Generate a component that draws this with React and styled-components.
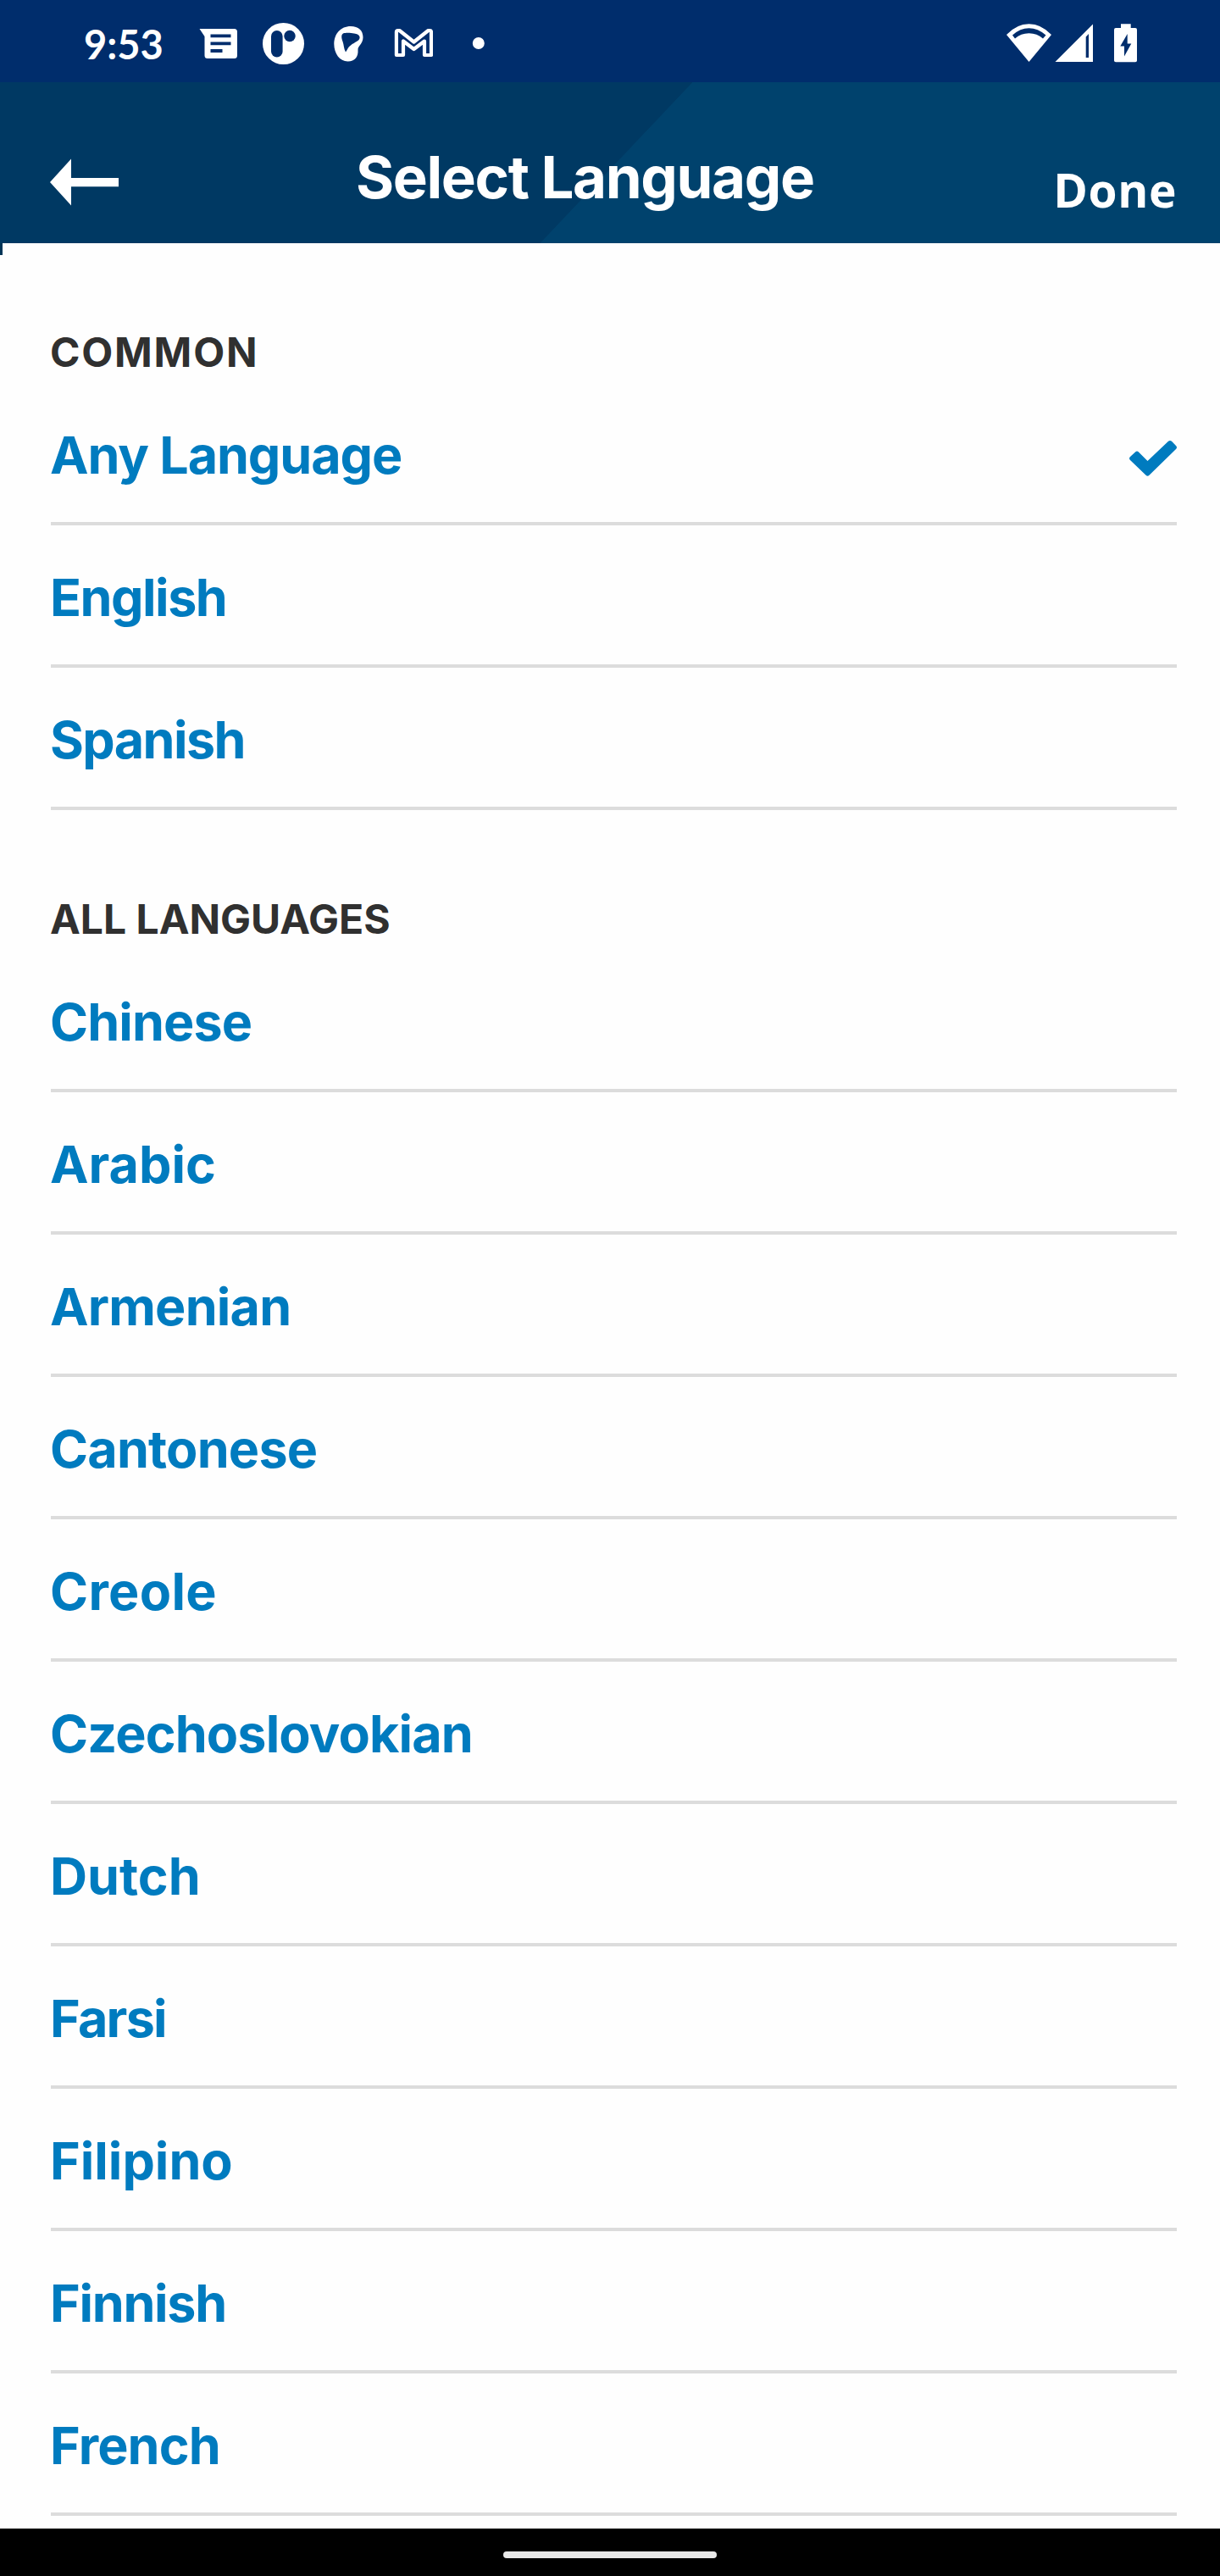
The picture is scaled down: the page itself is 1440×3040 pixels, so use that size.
import React from "react";
import styled, { createGlobalStyle } from "styled-components";

const GlobalStyle = createGlobalStyle`
  body {
    margin: 0;
    background: #fefefe;
  }
`;

const Screen = styled.div`
  display: flex;
  flex-direction: column;
  width: 1440px;
  height: 3040px;
  overflow: hidden;
  background: #fefefe;
  font-family: Inter, "Liberation Sans", sans-serif;
`;

const StatusBar = styled.div`
  display: flex;
  align-items: center;
  box-sizing: border-box;
  height: 97px;
  flex: none;
  padding: 7px 98px 0 99px;
  background: #002d6c;
  color: #fff;
`;

const Clock = styled.div`
  width: 136px;
  font: 700 47px/56px Lato, sans-serif;
`;

const Glyph = styled.svg`
  display: block;
  flex: none;
  width: ${(p) => p.$width}px;
  height: ${(p) => p.$height || 50}px;
  margin-left: ${(p) => p.$gap || 0}px;
  margin-top: ${(p) => p.$drop || 0}px;
`;

const SystemIcons = styled.div`
  display: flex;
  align-items: center;
  margin-left: auto;
`;

const Header = styled.header`
  display: flex;
  align-items: center;
  box-sizing: border-box;
  height: 190px;
  flex: none;
  padding: 34px 51px 0 59px;
  color: #fff;
  background: linear-gradient(to bottom right, #003963 50%, #00426d 50.3%) 637px 0 / 180px 190px no-repeat,
    linear-gradient(to right, #003963 640px, #00426d 640px);
`;

const BackButton = styled.button`
  display: flex;
  width: 361px;
  padding: 0;
  border: 0;
  background: none;
`;

const Title = styled.h1`
  margin: 0;
  font-size: 69px;
  font-weight: 700;
  line-height: 84px;
  letter-spacing: -1.4px;
  white-space: nowrap;
`;

const DoneButton = styled.button`
  margin: 30px 0 0 auto;
  padding: 0;
  border: 0;
  background: none;
  color: #fff;
  font: 700 55px/74px "Open Sans", "Noto Sans", sans-serif;
  letter-spacing: 0.6px;
`;

const Content = styled.main`
  flex: 1;
  min-height: 0;
  padding: 0 51px 0 60px;
  position: relative;
`;

const EdgeMark = styled.span`
  position: absolute;
  left: 0;
  top: 0;
  width: 3px;
  height: 14px;
  background: #003557;
`;

const SectionTitle = styled.h2`
  display: flex;
  align-items: flex-end;
  box-sizing: border-box;
  height: 165px;
  margin: 0;
  padding-bottom: 7px;
  color: #303030;
  font-size: 48px;
  font-weight: 700;
  line-height: 58px;
  letter-spacing: ${(p) => p.$tracking}px;
  text-indent: -1px;
`;

const List = styled.ul`
  margin: 0;
  padding: 0;
  list-style: none;
`;

const Row = styled.li`
  display: flex;
  align-items: center;
  justify-content: space-between;
  box-sizing: border-box;
  height: 168px;
  padding-top: 5px;
  border-bottom: 4px solid #dcdcdc;
  color: #007bbf;
  font-size: 61px;
  font-weight: 700;
  line-height: 74px;
  letter-spacing: ${(p) => p.$tracking}px;
  text-indent: -1px;
`;

const NavigationBar = styled.div`
  display: flex;
  justify-content: center;
  box-sizing: border-box;
  height: 56px;
  flex: none;
  padding-top: 27px;
  background: #000;
`;

const HomeHandle = styled.div`
  width: 252px;
  height: 8px;
  border-radius: 4px;
  background: #e8e8e8;
`;

const sections = [
  {
    title: "COMMON",
    tracking: 1.8,
    items: [
      { name: "Any Language", tracking: -1.1, selected: true },
      { name: "English", tracking: -1.5 },
      { name: "Spanish", tracking: -1.6 },
    ],
  },
  {
    title: "ALL LANGUAGES",
    tracking: 0,
    items: [
      { name: "Chinese", tracking: -0.9 },
      { name: "Arabic", tracking: 0 },
      { name: "Armenian", tracking: -0.8 },
      { name: "Cantonese", tracking: -0.8 },
      { name: "Creole", tracking: 0.3 },
      { name: "Czechoslovokian", tracking: -0.85 },
      { name: "Dutch", tracking: 0 },
      { name: "Farsi", tracking: -1.8 },
      { name: "Filipino", tracking: 0 },
      { name: "Finnish", tracking: -1.3 },
      { name: "French", tracking: -0.9 },
    ],
  },
];

const MessageIcon = () => (
  <Glyph $width={46} viewBox="235 27 46 50">
    <path fill="#fff" d="M235.5 34H276.500Q280 34 280 37.500V65.500Q280 69 276.500 69H245Q241.500 69 241.500 65.500V43Z" />
    <path stroke="#002d6c" strokeWidth="3.800" d="M248.500 42.300H272.500M248.500 51.300H272.500M248.500 60H262.500" />
  </Glyph>
);

const RoundAppIcon = () => (
  <Glyph $width={50} $gap={29} viewBox="310 27 50 50">
    <circle cx="334.500" cy="51.500" r="24.500" fill="#fff" />
    <rect x="320" y="36" width="13.600" height="31.500" rx="6.800" fill="#002d6c" />
    <circle cx="342" cy="42.500" r="6.700" fill="#002d6c" />
  </Glyph>
);

const BlobIcon = () => (
  <Glyph $width={36} $gap={33} viewBox="393 27 36 50">
    <path
      fill="#fff"
      fillRule="evenodd"
      d="M414 31C423 31 428.500 36 428.500 44C428.500 52 422 54 422.500 59C423 67 419 72.500 410.500 72.500C401 72.500 394.300 63 394.300 52C394.300 40 402 31 414 31ZM405 39.500C402.500 41 403 45 404.500 49C406 53 405.500 57 408 61.500C411 57 411 55.500 414 53.500C416 51.500 417.500 51.500 419 50C422 48.500 425 47 424.500 43.500C424 41 421.500 40 418 39.500C414 38.800 408 38.500 405 39.500Z"
    />
  </Glyph>
);

const MailIcon = () => (
  <Glyph $width={46} $gap={36} viewBox="465 27 46 50">
    <path
      fill="none"
      stroke="#fff"
      strokeWidth="4.200"
      strokeLinejoin="round"
      d="M467.900 37.800Q467.900 36 469.700 36H471.500L488.500 49.500L505.500 36H507.200Q509 36 509 37.800V65H501V48.500L488.500 58L476 48.500V65H467.900Z"
    />
  </Glyph>
);

const MoreDot = () => (
  <Glyph $width={16} $gap={46} viewBox="557 27 16 50">
    <circle cx="564.800" cy="51" r="7" fill="#fff" />
  </Glyph>
);

const WifiIcon = () => (
  <Glyph $width={54} viewBox="1188 27 54 50">
    <path
      fill="#fff"
      fillRule="evenodd"
      d="M1188 41Q1200 28.300 1214.500 28.300Q1229 28.300 1241 41L1214.500 73ZM1195 41.500L1198 45.500Q1205 39.200 1214.500 39.200Q1224 39.200 1231 45.500L1234.500 41.500Q1225 33.200 1214.500 33.200Q1204 33.200 1195 41.500Z"
    />
  </Glyph>
);

const SignalIcon = () => (
  <Glyph $width={46} $gap={3} viewBox="1245 27 46 50">
    <path fill="#fff" fillRule="evenodd" d="M1245.500 73L1290 28.500V73ZM1281.700 43.500V68H1285V40Z" />
  </Glyph>
);

const BatteryIcon = () => (
  <Glyph $width={28} $gap={23} viewBox="1314 27 28 50">
    <path
      fill="#fff"
      fillRule="evenodd"
      d="M1323 28.300H1334.700V33H1340Q1342 33 1342 35V71.500Q1342 73.300 1340 73.300H1317Q1315 73.300 1315 71.500V35Q1315 33 1317 33H1323ZM1330.700 40L1322.300 54.500H1327V66.500L1335.300 51.500H1330.700Z"
    />
  </Glyph>
);

const ArrowIcon = () => (
  <Glyph $width={82} $height={56} $drop={12} viewBox="59 187 82 56">
    <path fill="#fff" d="M59 215L84 187.500V210H140V220.300H84V242.500Z" />
  </Glyph>
);

const CheckIcon = () => (
  <Glyph $width={57} $height={44} $drop={8} viewBox="1332 521 57 44">
    <path
      fill="#007bbf"
      d="M1334 545Q1332 543 1334 541L1340 535.500Q1342 533.700 1344 535.500L1354.500 546L1379 522.800Q1381 521 1383 522.800L1388 528Q1390 530 1388 532L1356.500 562.800Q1354.500 564.500 1352.500 562.800Z"
    />
  </Glyph>
);

export default function App() {
  return (
    <>
      <GlobalStyle />
      <Screen>
        <StatusBar>
          <Clock>9:53</Clock>
          <MessageIcon />
          <RoundAppIcon />
          <BlobIcon />
          <MailIcon />
          <MoreDot />
          <SystemIcons>
            <WifiIcon />
            <SignalIcon />
            <BatteryIcon />
          </SystemIcons>
        </StatusBar>
        <Header>
          <BackButton aria-label="Back">
            <ArrowIcon />
          </BackButton>
          <Title>Select Language</Title>
          <DoneButton>Done</DoneButton>
        </Header>
        <Content>
          <EdgeMark />
          {sections.map((section) => (
            <section key={section.title}>
              <SectionTitle $tracking={section.tracking}>{section.title}</SectionTitle>
              <List>
                {section.items.map((item) => (
                  <Row key={item.name} $tracking={item.tracking}>
                    {item.name}
                    {item.selected && <CheckIcon />}
                  </Row>
                ))}
              </List>
            </section>
          ))}
        </Content>
        <NavigationBar>
          <HomeHandle />
        </NavigationBar>
      </Screen>
    </>
  );
}
